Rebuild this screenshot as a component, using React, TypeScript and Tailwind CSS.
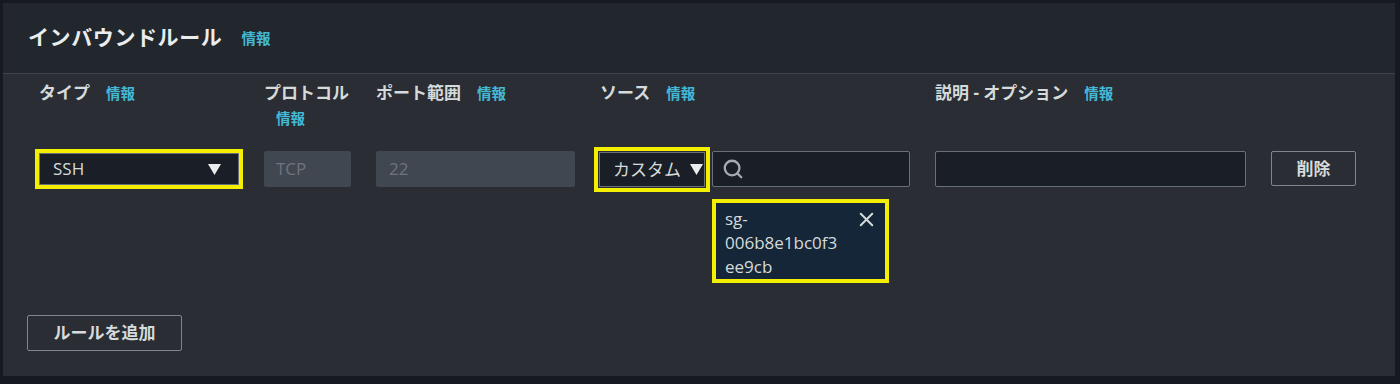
import { Search, X } from "lucide-react"

const FONT = {
  fontFamily: '"Open Sans", "Noto Sans CJK JP", sans-serif',
}

function Info({ className = "" }: { className?: string }) {
  return (
    <span className={`text-[14.5px] font-bold text-[#44b9d6] ${className}`}>情報</span>
  )
}

function Caret() {
  return (
    <svg width="13" height="11" viewBox="0 0 13 11" aria-hidden>
      <polygon points="0,0 13,0 6.5,11" fill="#eaeded" />
    </svg>
  )
}

function Label({ text, wrap = false }: { text: string; wrap?: boolean }) {
  return (
    <div className="h-[76px] pt-[5px] text-[17px] font-bold leading-[25px] text-[#d5dbdb]">
      {text}
      {wrap ? <br /> : null}
      <Info className={wrap ? "ml-[12px]" : "ml-[16px]"} />
    </div>
  )
}

export default function App() {
  return (
    <div className="h-[384px] w-[1400px] bg-[#16191f] pl-[3px] pt-[3px]" style={FONT}>
      <div className="flex h-[373px] w-[1392px] flex-col bg-[#2a2d33]">
        <div className="flex h-[71px] items-center border-b border-[#3e434a] bg-[#22262d] pl-[25px]">
          <h2 className="text-[21px] font-bold tracking-[0.6px] text-[#eaeded]">インバウンドルール</h2>
          <Info className="ml-[19px] mt-[2px]" />
        </div>

        <div className="flex flex-1 flex-col px-[24px]">
          <div className="ml-[12px] mt-[1px] flex gap-[25px]">
            <div className="w-[200px]">
              <Label text="タイプ" />
              <div className="mt-[2px] flex h-[32px] items-center justify-between border border-[#687078] bg-[#1a1f27] pl-[13px] pr-[17px] text-[17px] text-[#d5dbdb] outline-[4px] outline-[#f4ee00]">
                <span>SSH</span>
                <Caret />
              </div>
            </div>

            <div className="w-[87px]">
              <Label text="プロトコル" wrap />
              <div className="flex h-[36px] items-center rounded-[2px] bg-[#414750] pl-[12px] text-[17px] text-[#6d747c]">
                TCP
              </div>
            </div>

            <div className="w-[199px]">
              <Label text="ポート範囲" />
              <div className="flex h-[36px] items-center rounded-[2px] bg-[#414750] pl-[13px] text-[17px] text-[#6d747c]">
                22
              </div>
            </div>

            <div className="w-[310px]">
              <Label text="ソース" />
              <div className="flex items-start">
                <div className="ml-[-1px] mt-[1px] flex h-[35px] w-[106px] items-center justify-between border border-[#687078] bg-[#1a1f27] pl-[13px] pr-[1px] text-[17px] text-[#d5dbdb] outline-[4px] outline-offset-[1px] outline-[#f4ee00]">
                  <span>カスタム</span>
                  <Caret />
                </div>
                <div className="ml-[7px] flex flex-1 flex-col">
                  <div className="flex h-[36px] items-center rounded-[2px] border border-[#687078] bg-[#1a1f27] pl-[9px]">
                    <Search size={22} strokeWidth={2.5} className="text-[#a5abb1]" />
                  </div>
                  <div className="mt-[12px] flex h-[84px] w-[177px] justify-between border-[4px] border-[#f4ee00] bg-[#152638] pl-[9px] pr-[7px] pt-[4px]">
                    <div className="text-[17px] leading-[24px] text-[#d5dbdb]">
                      <div>sg-</div>
                      <div>006b8e1bc0f3</div>
                      <div>ee9cb</div>
                    </div>
                    <X size={23} strokeWidth={2.1} className="mt-[1px] text-[#d5dbdb]" />
                  </div>
                </div>
              </div>
            </div>

            <div className="w-[311px]">
              <Label text="説明 - オプション" />
              <div className="h-[36px] rounded-[2px] border border-[#687078] bg-[#1a1f27]" />
            </div>

            <div className="w-[85px]">
              <div className="h-[76px]" />
              <button className="flex h-[35px] w-[85px] items-center justify-center rounded-[2px] border border-[#7d858d] text-[17px] font-bold text-[#d5dbdb]">
                削除
              </button>
            </div>
          </div>

          <div className="mt-auto mb-[25px]">
            <button className="flex h-[36px] w-[155px] items-center justify-center rounded-[2px] border border-[#7d858d] text-[17px] font-bold text-[#d5dbdb]">
              ルールを追加
            </button>
          </div>
        </div>
      </div>
    </div>
  )
}
